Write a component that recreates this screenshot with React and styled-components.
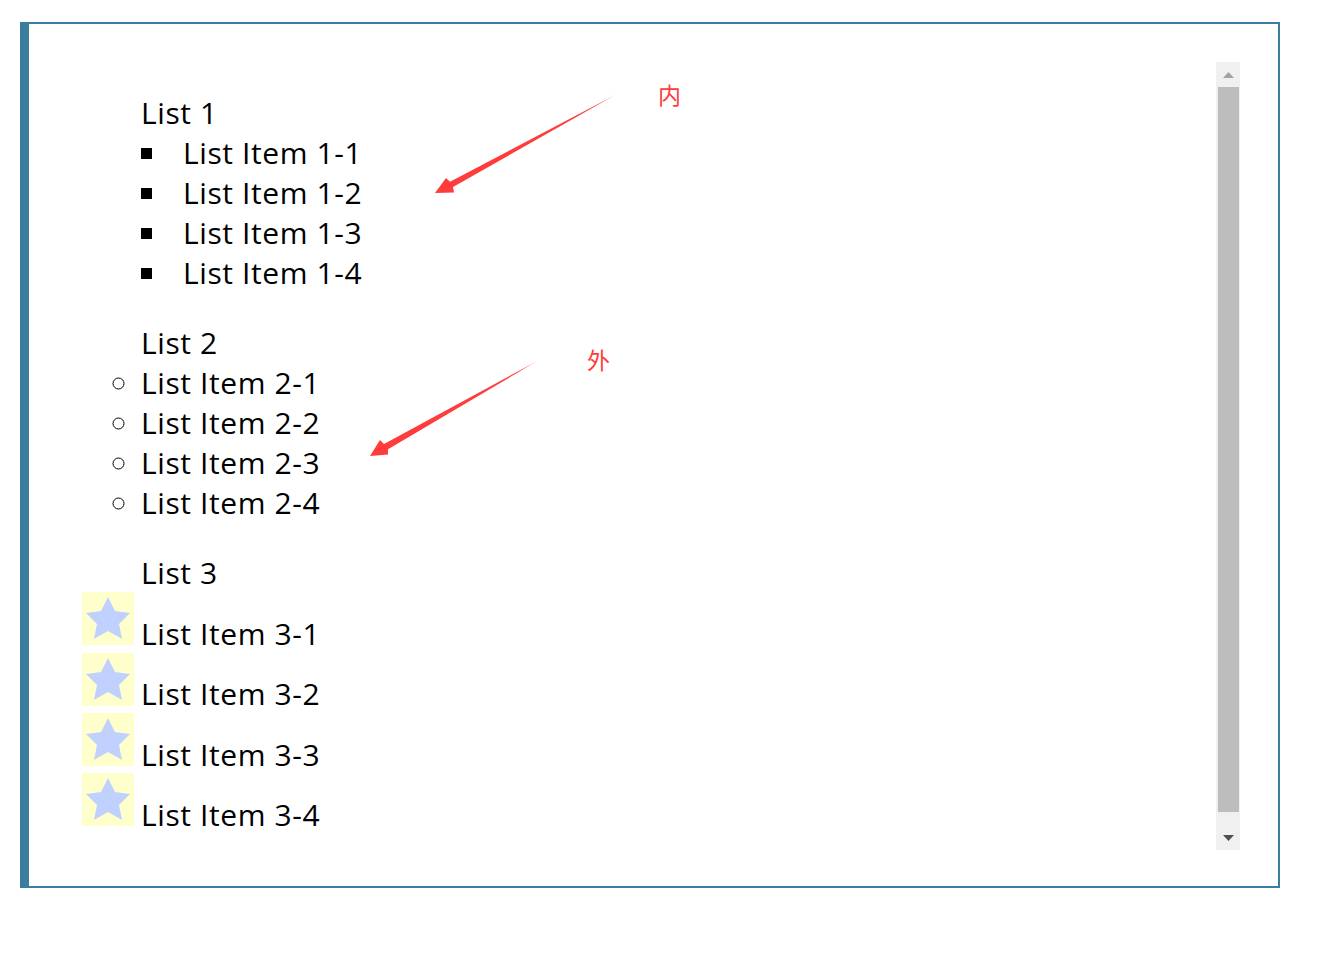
import React from 'react';
import styled, { createGlobalStyle } from 'styled-components';

const lists = [
  { title: 'List 1', prefix: 'List Item 1' },
  { title: 'List 2', prefix: 'List Item 2' },
  { title: 'List 3', prefix: 'List Item 3' },
];
const nums = [1, 2, 3, 4];

const StarTile = () => (
  <StarSvg viewBox="0 0 52 53">
    <rect width="52" height="53" fill="#ffffcc" />
    <polygon
      fill="#c0d0ff"
      points="26,5 33,19 48,21 37,32 40,47 26,39 12,47 15,32 4,21 19,19"
    />
  </StarSvg>
);

const Arrow = ({ points, tailX, tailY, tipX, tipY, id }) => (
  <svg width="1343" height="957" viewBox="0 0 1343 957">
    <defs>
      <linearGradient id={id} gradientUnits="userSpaceOnUse" x1={tailX} y1={tailY} x2={tipX} y2={tipY}>
        <stop offset="0" stopColor="#ff3b3b" stopOpacity="0.5" />
        <stop offset="0.12" stopColor="#ff3b3b" />
      </linearGradient>
    </defs>
    <polygon points={points} fill={`url(#${id})`} />
  </svg>
);

const App = () => {
  return (
    <>
      <GlobalStyle />
      <Panel>
        <Content>
          <SquareList>
            <Caption>{lists[0].title}</Caption>
            {nums.map((n) => (
              <li key={n}>{lists[0].prefix}-{n}</li>
            ))}
          </SquareList>
          <CircleList>
            <Caption>{lists[1].title}</Caption>
            {nums.map((n) => (
              <li key={n}>{lists[1].prefix}-{n}</li>
            ))}
          </CircleList>
          <StarList>
            <Caption>{lists[2].title}</Caption>
            {nums.map((n) => (
              <StarItem key={n}>
                <StarTile />
                <span>{lists[2].prefix}-{n}</span>
              </StarItem>
            ))}
          </StarList>
        </Content>
        <Scrollbar>
          <ScrollButton>
            <svg width="11" height="6" viewBox="0 0 11 6"><polygon points="5.5,0 11,6 0,6" fill="#a3a3a3" /></svg>
          </ScrollButton>
          <ThumbTrack><Thumb /></ThumbTrack>
          <ScrollButton>
            <svg width="11" height="6" viewBox="0 0 11 6"><polygon points="0,0 11,0 5.5,6" fill="#505050" /></svg>
          </ScrollButton>
        </Scrollbar>
      </Panel>
      <Overlay>
        <Arrow id="a1" tailX={617} tailY={94} tipX={435} tipY={193}
          points="617,94 453,187 454,192.5 435,193 446,178 450,181.7" />
        <Arrow id="a2" tailX={539} tailY={360} tipX={370} tipY={456}
          points="539,360 388,449.3 388,454.5 370,456 380,440 384,444" />
      </Overlay>
      <Note $x={658} $y={78}>内</Note>
      <Note $x={587} $y={343}>外</Note>
    </>
  );
};

export default App;

const GlobalStyle = createGlobalStyle`
  html, body {
    margin: 0;
    padding: 0;
    background: #fff;
  }
  body {
    font-family: "Open Sans", "Noto Sans", "Noto Sans CJK SC", sans-serif;
    color: #000;
  }
`;

const Panel = styled.div`
  box-sizing: border-box;
  display: flex;
  width: 1260px;
  height: 866px;
  margin: 22px 0 0 20px;
  padding: 38px 38px 36px 53px;
  border: 2px solid #3a7d9c;
  border-left-width: 9px;
`;

const Content = styled.div`
  flex: 1;
  padding-top: 31px;
  font-size: 30px;
  letter-spacing: 0.6px;
  line-height: 40px;
`;

const Caption = styled.div`
  list-style: none;
`;

const SquareList = styled.ul`
  margin: 0 0 30px;
  padding: 0 0 0 59px;
  list-style: square inside;
`;

const CircleList = styled.ul`
  margin: 0 0 30px;
  padding: 0 0 0 59px;
  list-style: circle outside;
`;

const StarList = styled.ul`
  margin: 0;
  padding: 0 0 0 59px;
  list-style: none;
`;

const StarItem = styled.li`
  display: flex;
  align-items: flex-start;
  height: 60.33px;
  margin-left: -59px;

  span {
    margin: 21px 0 0 7px;
  }
`;

const StarSvg = styled.svg`
  display: block;
  flex: none;
  width: 52px;
  height: 53px;
  margin-top: -0.6px;
`;

const Scrollbar = styled.div`
  display: flex;
  flex-direction: column;
  flex: none;
  width: 24px;
  background: #f0f0f0;
`;

const ScrollButton = styled.div`
  display: flex;
  align-items: center;
  justify-content: center;
  flex: none;
  height: 25px;
`;

const ThumbTrack = styled.div`
  flex: 1;
  padding: 0 1px 0 2px;
`;

const Thumb = styled.div`
  height: 725px;
  background: #bdbdbd;
`;

const Overlay = styled.div`
  position: absolute;
  top: 0;
  left: 0;
  pointer-events: none;

  svg {
    position: absolute;
    top: 0;
    left: 0;
  }
`;

const Note = styled.span`
  position: absolute;
  left: ${(p) => p.$x}px;
  top: ${(p) => p.$y}px;
  font-family: "Noto Sans CJK SC", sans-serif;
  font-size: 23px;
  line-height: 32px;
  color: #ff3b3b;
`;
